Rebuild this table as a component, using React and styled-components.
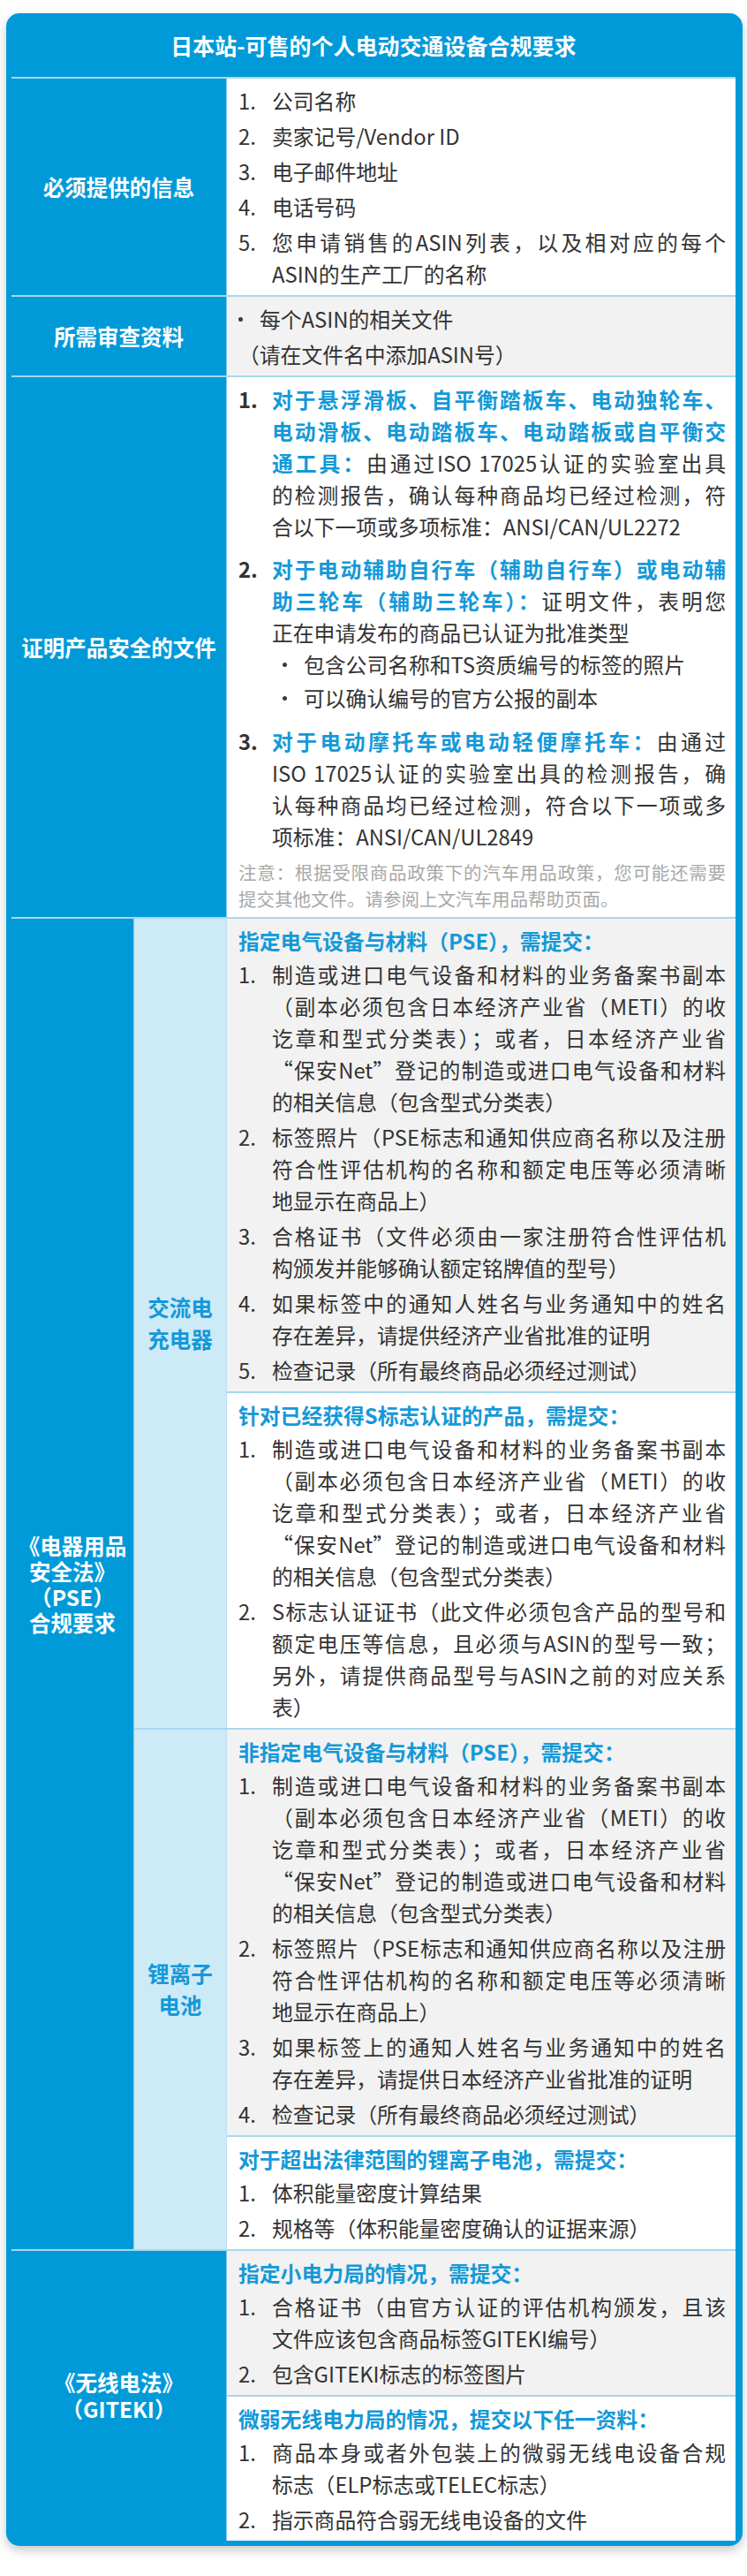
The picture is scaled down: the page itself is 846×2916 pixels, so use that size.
import styled, { createGlobalStyle } from 'styled-components';

const GlobalStyle = createGlobalStyle`
  body {
    margin: 0;
    background: #ffffff;
    font-family: 'Noto Sans CJK SC', 'Noto Sans', sans-serif;
  }
  * {
    box-sizing: border-box;
  }
`;

const Page = styled.div`
  padding: 15px 5px 28px 7px;
`;

const Card = styled.div`
  width: 834px;
  background-color: #019ad9;
  border-radius: 15px;
  padding: 0 8px 6px 6px;
  box-shadow: 0 5px 12px rgba(0, 0, 0, 0.22);
`;

const Title = styled.div`
  height: 72px;
  display: flex;
  align-items: center;
  justify-content: center;
  color: #ffffff;
  font-size: 25px;
  font-weight: 700;
`;

const Row = styled.div`
  display: flex;
  border-top: 2px solid #a6d8f1;
`;

const Label = styled.div`
  width: 244px;
  flex: none;
  display: flex;
  align-items: center;
  justify-content: center;
  text-align: center;
  color: #ffffff;
  font-size: 24.5px;
  font-weight: 700;
  line-height: 30px;
  border-right: 1px solid #7fc8ec;
`;

const OuterLabel = styled(Label)`
  width: 139px;
  line-height: 29px;
`;

const SubRows = styled.div`
  flex: 1;
  min-width: 0;
  display: flex;
  flex-direction: column;
`;

const SubRow = styled.div`
  display: flex;
  flex: 1;
  & + & {
    border-top: 2px solid #a6d8f1;
  }
`;

const SubLabel = styled.div`
  width: 105px;
  flex: none;
  display: flex;
  align-items: center;
  justify-content: center;
  text-align: center;
  background-color: #cdeaf7;
  color: #1499d8;
  font-size: 24.5px;
  font-weight: 700;
  line-height: 36px;
  border-right: 1px solid #b9e0f3;
`;

const Content = styled.div`
  flex: 1;
  min-width: 0;
  display: flex;
  flex-direction: column;
`;

const Section = styled.div`
  background-color: ${({ $grey }) => ($grey ? '#f2f2f2' : '#ffffff')};
  padding: 7px 11px 6px 13px;
  color: #333333;
  font-size: 23.8px;
  line-height: 36px;
  & + & {
    border-top: 2px solid #a6d8f1;
  }
`;

const Heading = styled.div`
  color: #1499d8;
  font-weight: 700;
  margin-bottom: -2px;
`;

const Item = styled.div`
  display: flex;
  margin-top: ${({ $gap }) => $gap}px;
  &:first-child {
    margin-top: 0;
  }
`;

const Marker = styled.span`
  width: ${({ $width }) => $width}px;
  flex: none;
  font-weight: ${({ $bold }) => ($bold ? 700 : 400)};
`;

const Dot = styled.span`
  width: 24px;
  flex: none;
  display: flex;
  align-items: center;
  height: 36px;
  &::before {
    content: '';
    width: 5px;
    height: 5px;
    border-radius: 50%;
    background-color: #3a3a3a;
  }
`;

const Body = styled.div`
  flex: 1;
  min-width: 0;
`;

const Line = styled.div`
  text-align: justify;
  text-align-last: ${({ $last }) => ($last ? 'auto' : 'justify')};
`;

const Blue = styled.span`
  color: #1499d8;
  font-weight: 700;
`;

const SubList = styled.div`
  margin-left: 50px;
`;

const Plain = styled.div`
  margin-top: 4px;
`;

const Note = styled.div`
  margin-top: 7px;
  color: #a8a8a8;
  font-size: 20.5px;
  line-height: 30px;
`;

const Lines = ({ lines }) =>
  lines.map((line, idx) => (
    <Line key={idx} $last={idx === lines.length - 1}>
      {line}
    </Line>
  ));

const NumberedList = ({ items, gap = 4, bold = false }) =>
  items.map((lines, idx) => (
    <Item key={idx} $gap={gap}>
      <Marker $width={38} $bold={bold}>
        {idx + 1}.
      </Marker>
      <Body>
        <Lines lines={lines} />
      </Body>
    </Item>
  ));

const Bullet = ({ children, gap = 4 }) => (
  <Item $gap={gap}>
    <Dot />
    <Body>{children}</Body>
  </Item>
);

const filingLines = [
  '制造或进口电气设备和材料的业务备案书副本',
  '（副本必须包含日本经济产业省（METI）的收',
  '讫章和型式分类表）；或者，日本经济产业省',
  '“保安Net”登记的制造或进口电气设备和材料',
  '的相关信息（包含型式分类表）',
];

const labelPhotoLines = [
  '标签照片（PSE标志和通知供应商名称以及注册',
  '符合性评估机构的名称和额定电压等必须清晰',
  '地显示在商品上）',
];

const checkLines = ['检查记录（所有最终商品必须经过测试）'];

const sections = {
  pse: {
    heading: '指定电气设备与材料（PSE），需提交：',
    items: [
      filingLines,
      labelPhotoLines,
      ['合格证书（文件必须由一家注册符合性评估机', '构颁发并能够确认额定铭牌值的型号）'],
      ['如果标签中的通知人姓名与业务通知中的姓名', '存在差异，请提供经济产业省批准的证明'],
      checkLines,
    ],
  },
  sMark: {
    heading: '针对已经获得S标志认证的产品，需提交：',
    items: [
      filingLines,
      [
        'S标志认证证书（此文件必须包含产品的型号和',
        '额定电压等信息，且必须与ASIN的型号一致；',
        '另外，请提供商品型号与ASIN之前的对应关系',
        '表）',
      ],
    ],
  },
  nonPse: {
    heading: '非指定电气设备与材料（PSE），需提交：',
    items: [
      filingLines,
      labelPhotoLines,
      ['如果标签上的通知人姓名与业务通知中的姓名', '存在差异，请提供日本经济产业省批准的证明'],
      checkLines,
    ],
  },
  battery: {
    heading: '对于超出法律范围的锂离子电池，需提交：',
    items: [['体积能量密度计算结果'], ['规格等（体积能量密度确认的证据来源）']],
  },
  smallPower: {
    heading: '指定小电力局的情况，需提交：',
    items: [
      ['合格证书（由官方认证的评估机构颁发，且该', '文件应该包含商品标签GITEKI编号）'],
      ['包含GITEKI标志的标签图片'],
    ],
  },
  weakRadio: {
    heading: '微弱无线电力局的情况，提交以下任一资料：',
    items: [
      ['商品本身或者外包装上的微弱无线电设备合规', '标志（ELP标志或TELEC标志）'],
      ['指示商品符合弱无线电设备的文件'],
    ],
  },
};

const RequirementSection = ({ data, grey }) => (
  <Section $grey={grey}>
    <Heading>{data.heading}</Heading>
    <NumberedList items={data.items} />
  </Section>
);

const safetyItems = [
  [
    <Blue key="a">对于悬浮滑板、自平衡踏板车、电动独轮车、</Blue>,
    <Blue key="b">电动滑板、电动踏板车、电动踏板或自平衡交</Blue>,
    <>
      <Blue>通工具：</Blue>由通过ISO 17025认证的实验室出具
    </>,
    '的检测报告，确认每种商品均已经过检测，符',
    '合以下一项或多项标准：ANSI/CAN/UL2272',
  ],
  [
    <Blue key="a">对于电动辅助自行车（辅助自行车）或电动辅</Blue>,
    <>
      <Blue>助三轮车（辅助三轮车）：</Blue>证明文件，表明您
    </>,
    '正在申请发布的商品已认证为批准类型',
  ],
  [
    <>
      <Blue>对于电动摩托车或电动轻便摩托车：</Blue>由通过
    </>,
    'ISO 17025认证的实验室出具的检测报告，确',
    '认每种商品均已经过检测，符合以下一项或多',
    '项标准：ANSI/CAN/UL2849',
  ],
];

const App = () => {
  return (
    <Page lang="zh-CN">
      <GlobalStyle />
      <Card>
        <Title>日本站-可售的个人电动交通设备合规要求</Title>

        <Row>
          <Label>必须提供的信息</Label>
          <Content>
            <Section>
              <NumberedList
                items={[
                  ['公司名称'],
                  ['卖家记号/Vendor ID'],
                  ['电子邮件地址'],
                  ['电话号码'],
                  ['您申请销售的ASIN列表，以及相对应的每个', 'ASIN的生产工厂的名称'],
                ]}
              />
            </Section>
          </Content>
        </Row>

        <Row>
          <Label>所需审查资料</Label>
          <Content>
            <Section $grey>
              <Bullet>每个ASIN的相关文件</Bullet>
              <Plain>（请在文件名中添加ASIN号）</Plain>
            </Section>
          </Content>
        </Row>

        <Row>
          <Label>证明产品安全的文件</Label>
          <Content>
            <Section>
              <Item $gap={0}>
                <Marker $width={38} $bold>
                  1.
                </Marker>
                <Body>
                  <Lines lines={safetyItems[0]} />
                </Body>
              </Item>
              <Item $gap={12}>
                <Marker $width={38} $bold>
                  2.
                </Marker>
                <Body>
                  <Lines lines={safetyItems[1]} />
                </Body>
              </Item>
              <SubList>
                <Bullet gap={3}>包含公司名称和TS资质编号的标签的照片</Bullet>
                <Bullet gap={2}>可以确认编号的官方公报的副本</Bullet>
              </SubList>
              <Item $gap={13}>
                <Marker $width={38} $bold>
                  3.
                </Marker>
                <Body>
                  <Lines lines={safetyItems[2]} />
                </Body>
              </Item>
              <Note>
                <Lines
                  lines={[
                    '注意：根据受限商品政策下的汽车用品政策，您可能还需要',
                    '提交其他文件。请参阅上文汽车用品帮助页面。',
                  ]}
                />
              </Note>
            </Section>
          </Content>
        </Row>

        <Row>
          <OuterLabel>
            《电器用品
            <br />
            安全法》
            <br />
            （PSE）
            <br />
            合规要求
          </OuterLabel>
          <SubRows>
            <SubRow>
              <SubLabel>
                交流电
                <br />
                充电器
              </SubLabel>
              <Content>
                <RequirementSection data={sections.pse} grey />
                <RequirementSection data={sections.sMark} />
              </Content>
            </SubRow>
            <SubRow>
              <SubLabel>
                锂离子
                <br />
                电池
              </SubLabel>
              <Content>
                <RequirementSection data={sections.nonPse} grey />
                <RequirementSection data={sections.battery} />
              </Content>
            </SubRow>
          </SubRows>
        </Row>

        <Row>
          <Label>
            《无线电法》
            <br />
            （GITEKI）
          </Label>
          <Content>
            <RequirementSection data={sections.smallPower} grey />
            <RequirementSection data={sections.weakRadio} />
          </Content>
        </Row>
      </Card>
    </Page>
  );
};

export default App;
